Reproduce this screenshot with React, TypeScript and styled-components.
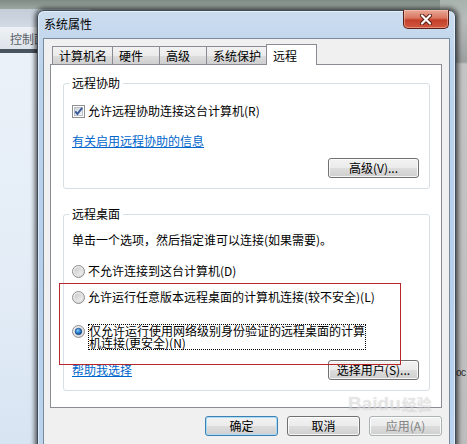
import React from "react";
import styled, { createGlobalStyle } from "styled-components";

const GlobalStyle = createGlobalStyle`
  html, body {
    margin: 0;
    padding: 0;
  }
  body {
    font-family: "Noto Sans CJK SC", "Liberation Sans", sans-serif;
    font-size: 12px;
    color: #000;
  }
`;

const Desktop = styled.div`
  position: relative;
  width: 467px;
  height: 444px;
  overflow: hidden;
  background: linear-gradient(180deg, #7f8b86 0px, #a7b1ab 12px, #9ea3a3 40px, #b9b9b9 130px, #a9a9a9 100%);
`;

// windows behind the dialog
const BackWindow = styled.div`
  position: absolute;
  left: 0;
  top: 9px;
  width: 90px;
  bottom: 0;
  display: flex;
  flex-direction: column;
  background: #e7eef7;
`;

const BackTitle = styled.div`
  height: 18px;
  background: linear-gradient(180deg, #c3cdd8, #d2dae3);
`;

const BackToolbar = styled.div`
  height: 22px;
  display: flex;
  align-items: center;
  padding-left: 10px;
  color: #5a5f66;
  background: linear-gradient(180deg, #eef2f6, #dde3ea);
  border-bottom: 4px solid #4a545e;
`;

const BackBody = styled.div`
  flex: 1;
  background: linear-gradient(180deg, #eaf1f9 0%, #e3ecf6 60%, #d7e4f2 100%);
`;

const SideWindow = styled.div`
  position: absolute;
  left: 440px;
  top: 0;
  width: 27px;
  bottom: 0;
  display: flex;
  flex-direction: column;
  justify-content: flex-end;
  padding: 0 0 66px 16px;
  box-sizing: border-box;
  background: linear-gradient(180deg, #a9b3ad 0px, #b7bcbb 20px, #9c9f9f 62px, #c4c4c4 64px, #bdbdbd 100%);
  color: #2c2c2c;
  font-family: "Liberation Sans", sans-serif;
  font-size: 10px;
  letter-spacing: -0.5px;
`;

const Dialog = styled.div`
  position: absolute;
  left: 37px;
  top: 10px;
  width: 419px;
  height: 450px;
  box-sizing: border-box;
  padding: 0 5px;
  display: flex;
  flex-direction: column;
  border: 1px solid #3e4b59;
  border-radius: 7px 7px 0 0;
  background: linear-gradient(180deg, #cbdcee 0%, #bcd3ec 12%, #b6cfeb 60%, #bcd4ee 100%);
  box-shadow: 0 0 5px 2px rgba(0, 0, 0, 0.65), inset 0 0 0 1px rgba(255, 255, 255, 0.55);
`;

const TitleBar = styled.div`
  height: 27px;
  display: flex;
  align-items: flex-start;
  justify-content: space-between;
`;

const Title = styled.div`
  margin: 5px 0 0 1px;
  line-height: 16px;
  color: #000;
`;

const CloseButton = styled.div`
  width: 46px;
  height: 19px;
  margin: -1px 1px 0 0;
  box-sizing: border-box;
  display: flex;
  align-items: center;
  justify-content: center;
  border: 1px solid #5b2015;
  border-top: none;
  border-radius: 0 0 5px 5px;
  background: linear-gradient(180deg, #e9a997 0%, #d9765f 45%, #c5402a 55%, #d0583f 100%);
  box-shadow: inset 0 0 0 1px rgba(255, 210, 200, 0.45);
`;

const Client = styled.div`
  flex: 1;
  display: flex;
  flex-direction: column;
  padding: 5px 7px 0 6px;
  background: #f0f0f0;
  border: 1px solid #7a8a9e;
`;

const TabStrip = styled.div`
  display: flex;
  align-items: flex-end;
  padding-left: 2px;
  margin-bottom: -1px;
  position: relative;
  z-index: 1;
`;

const Tab = styled.div<{ $active?: boolean }>`
  box-sizing: border-box;
  min-width: ${(p) => (p.$active ? "51px" : "48px")};
  height: ${(p) => (p.$active ? "21px" : "18px")};
  margin: ${(p) => (p.$active ? "0" : "0 -1px 1px 0")};
  padding: ${(p) => (p.$active ? "3px 6px 0 6px" : "1px 5px 0 6px")};
  line-height: 16px;
  border: 1px solid #898c95;
  border-bottom: none;
  background: ${(p) =>
    p.$active ? "#fff" : "linear-gradient(180deg, #f2f2f2 0%, #ebebeb 50%, #dddddd 51%, #cfcfcf 100%)"};
`;

const TabPanel = styled.div`
  display: flex;
  flex-direction: column;
  padding: 18px 11px 16px 12px;
  background: #fff;
  border: 1px solid #898c95;
`;

const GroupBox = styled.section<{ $mt?: number }>`
  display: flex;
  flex-direction: column;
  margin-top: ${(p) => p.$mt ?? 0}px;
  padding: 0 10px 10px 8px;
  border: 1px solid #d5dfe5;
  border-radius: 3px;
`;

const GroupTitle = styled.div`
  align-self: flex-start;
  margin: -9px 0 0 -3px;
  padding: 0 3px;
  line-height: 16px;
  background: #fff;
`;

const Row = styled.div<{ $mt: number; $align?: string }>`
  display: flex;
  align-items: ${(p) => p.$align ?? "center"};
  justify-content: space-between;
  margin-top: ${(p) => p.$mt}px;
  line-height: 16px;
`;

const Option = styled.label<{ $align?: string }>`
  display: flex;
  align-items: ${(p) => p.$align ?? "center"};
  gap: 3px;
  line-height: 16px;
  white-space: nowrap;
`;

const FocusLabel = styled.span`
  width: 278px;
  box-sizing: border-box;
  border: 1px dotted #000;
  line-height: 12px;
  white-space: normal;
  margin-top: -1px;
`;

const Link = styled.a`
  color: #0066cc;
  text-decoration: underline;
  line-height: 16px;
  cursor: pointer;
`;

const Spacer = styled.div`
  flex: 1;
`;

const WinButton = styled.div<{ $width?: number; $default?: boolean; $disabled?: boolean }>`
  width: ${(p) => p.$width ?? 73}px;
  height: 20px;
  box-sizing: border-box;
  display: flex;
  align-items: center;
  justify-content: center;
  line-height: 16px;
  border-radius: 3px;
  border: 1px solid ${(p) => (p.$default ? "#3c7fb1" : p.$disabled ? "#adb2b5" : "#707070")};
  color: ${(p) => (p.$disabled ? "#838383" : "#000")};
  background: linear-gradient(180deg, #f2f2f2 0%, #ebebeb 50%, #dddddd 51%, #cfcfcf 100%);
  box-shadow: inset 0 0 0 1px ${(p) => (p.$default ? "#a9dcf6" : "rgba(255, 255, 255, 0.8)")};
`;

const ButtonBar = styled.div`
  display: flex;
  justify-content: flex-end;
  gap: 9px;
  margin-top: 8px;
`;

// overlays
const Annotation = styled.div`
  position: absolute;
  left: 59px;
  top: 283px;
  width: 342px;
  height: 82px;
  box-sizing: border-box;
  border: 1px solid #b8262b;
  pointer-events: none;
`;

const Watermark = styled.div`
  position: absolute;
  left: 348px;
  top: 393px;
  display: flex;
  align-items: baseline;
  font-family: "Liberation Sans", sans-serif;
  font-weight: bold;
  font-size: 19px;
  color: rgba(255, 255, 255, 0.35);
  text-shadow: 0 0 1px rgba(150, 150, 150, 0.4);
  pointer-events: none;

  small {
    font-family: "Noto Sans CJK SC", sans-serif;
    font-size: 15px;
    margin-left: 1px;
  }
`;

const CheckBox = () => (
  <svg width="13" height="13" viewBox="0 0 13 13">
    <defs>
      <linearGradient id="cbFill" x1="0" y1="0" x2="1" y2="1">
        <stop offset="0" stopColor="#cdd3db" />
        <stop offset="1" stopColor="#f7f8f9" />
      </linearGradient>
    </defs>
    <rect x="0.5" y="0.5" width="12" height="12" fill="#fff" stroke="#8e8f8f" />
    <rect x="2.5" y="2.5" width="8" height="8" fill="url(#cbFill)" stroke="#b9c0c8" />
    <path d="M3.2 6.3 L5.4 8.9 L10.2 2.8" fill="none" stroke="#3b5b9c" strokeWidth="1.9" />
  </svg>
);

const Radio = ({ checked }: { checked?: boolean }) => (
  <svg width="13" height="13" viewBox="0 0 13 13">
    <defs>
      <linearGradient id="rdRing" x1="0" y1="0" x2="1" y2="1">
        <stop offset="0" stopColor="#f4f4f4" />
        <stop offset="1" stopColor="#d4d4d4" />
      </linearGradient>
      <linearGradient id="rdInner" x1="0" y1="0" x2="1" y2="1">
        <stop offset="0" stopColor="#c9c9c9" />
        <stop offset="1" stopColor="#f2f2f2" />
      </linearGradient>
      <radialGradient id="rdDot" cx="0.4" cy="0.35" r="0.7">
        <stop offset="0" stopColor="#8fd3ff" />
        <stop offset="0.5" stopColor="#2a7fcf" />
        <stop offset="1" stopColor="#10427f" />
      </radialGradient>
    </defs>
    <circle cx="6.5" cy="6.5" r="6" fill="url(#rdRing)" stroke="#8f8f8f" />
    <circle cx="6.5" cy="6.5" r="4" fill="url(#rdInner)" />
    {checked && <circle cx="6.5" cy="6.5" r="3.3" fill="url(#rdDot)" stroke="#1a4a86" strokeWidth="0.6" />}
  </svg>
);

const CloseGlyph = () => (
  <svg width="14" height="11" viewBox="0 0 14 11">
    <path d="M3 1.5 L11 9.5 M11 1.5 L3 9.5" stroke="#5a1c12" strokeWidth="4" strokeLinecap="round" />
    <path d="M3 1.5 L11 9.5 M11 1.5 L3 9.5" stroke="#fff" strokeWidth="2.2" strokeLinecap="round" />
  </svg>
);

const tabs = ["计算机名", "硬件", "高级", "系统保护", "远程"];

export default function App() {
  return (
    <>
      <GlobalStyle />
      <Desktop>
        <BackWindow>
          <BackTitle />
          <BackToolbar>控制面板</BackToolbar>
          <BackBody />
        </BackWindow>
        <SideWindow>oc</SideWindow>

        <Dialog>
          <TitleBar>
            <Title>系统属性</Title>
            <CloseButton>
              <CloseGlyph />
            </CloseButton>
          </TitleBar>

          <Client>
            <TabStrip>
              {tabs.map((t) => (
                <Tab key={t} $active={t === "远程"}>
                  {t}
                </Tab>
              ))}
            </TabStrip>

            <TabPanel>
              <GroupBox>
                <GroupTitle>远程协助</GroupTitle>
                <Row $mt={12}>
                  <Option>
                    <CheckBox />
                    允许远程协助连接这台计算机(R)
                  </Option>
                </Row>
                <Row $mt={14}>
                  <Link>有关启用远程协助的信息</Link>
                </Row>
                <Row $mt={9}>
                  <Spacer />
                  <WinButton $width={91}>高级(V)...</WinButton>
                </Row>
              </GroupBox>

              <GroupBox $mt={25}>
                <GroupTitle>远程桌面</GroupTitle>
                <Row $mt={10}>单击一个选项，然后指定谁可以连接(如果需要)。</Row>
                <Row $mt={15}>
                  <Option>
                    <Radio />
                    不允许连接到这台计算机(D)
                  </Option>
                </Row>
                <Row $mt={10}>
                  <Option>
                    <Radio />
                    允许运行任意版本远程桌面的计算机连接(较不安全)(L)
                  </Option>
                </Row>
                <Row $mt={20} $align="flex-start">
                  <Option $align="flex-start">
                    <Radio checked />
                    <FocusLabel>仅允许运行使用网络级别身份验证的远程桌面的计算机连接(更安全)(N)</FocusLabel>
                  </Option>
                </Row>
                <Row $mt={10}>
                  <Link>帮助我选择</Link>
                  <WinButton $width={91}>选择用户(S)...</WinButton>
                </Row>
              </GroupBox>
            </TabPanel>

            <ButtonBar>
              <WinButton $default>确定</WinButton>
              <WinButton>取消</WinButton>
              <WinButton $disabled>应用(A)</WinButton>
            </ButtonBar>
          </Client>
        </Dialog>

        <Annotation />
        <Watermark>
          Baidu<small>经验</small>
        </Watermark>
      </Desktop>
    </>
  );
}
